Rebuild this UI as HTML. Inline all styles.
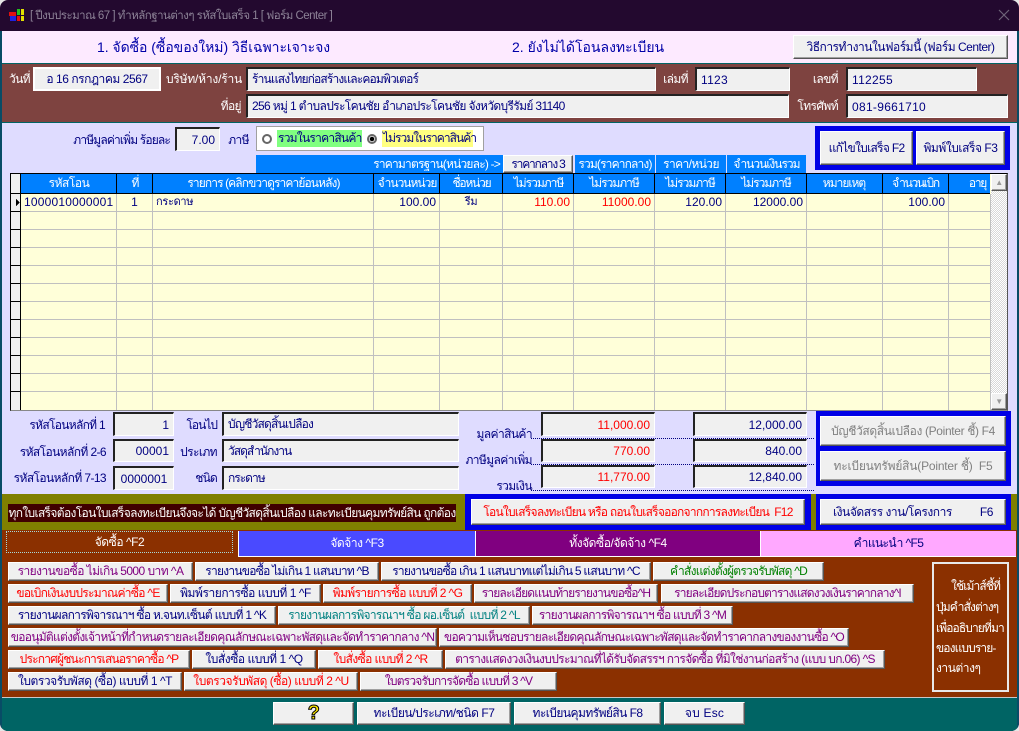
<!DOCTYPE html>
<html lang="th"><head><meta charset="utf-8"><title>ฟอร์ม Center</title>
<style>
html,body{margin:0;padding:0;width:1019px;height:731px;overflow:hidden;background:#e6e6e6}
body{font:12px "Liberation Sans","Noto Sans CJK SC",sans-serif;letter-spacing:-.45px;color:#000080;position:relative}
div,span.a{position:absolute;box-sizing:border-box;white-space:nowrap}
.r{background:#f0f0f0;border:1px solid;border-color:#fff #555 #555 #fff;box-shadow:inset -1px -1px 0 #a0a0a0;display:flex;align-items:center;justify-content:center}
.s{background:#f0f0f0;border:1px solid;border-color:#222 #fff #fff #222;border-top-width:2px;border-left-width:2px;display:flex;align-items:center;padding:0 4px}
.n{justify-content:flex-end;letter-spacing:0}
.m{letter-spacing:.3px}
.l{text-align:right;height:18px;line-height:18px;letter-spacing:-.6px}
.w{color:#fff}
.h{background:#0080ff;color:#fff;height:19px;top:174px;display:flex;align-items:center;justify-content:center;letter-spacing:-1px}
.c{height:17px;line-height:17px;top:194px;padding:0 3px;letter-spacing:0}
.q{letter-spacing:-.75px}
.t{letter-spacing:-.9px}
.red{color:#f00}.pur{color:#800080}.grn{color:#008000}.tea{color:#008080}
.f{background:#0000e6}
</style></head><body>
<div style="left:0;top:0;width:1019px;height:731px;background:#23092f;border-radius:8px;overflow:hidden">
<div style="left:0;top:31px;width:2px;height:700px;background:#084c66"></div>
<div style="left:1017px;top:31px;width:2px;height:700px;background:#084c66"></div>

<!-- title -->
<svg style="position:absolute;left:9px;top:8px" width="16" height="15" viewBox="0 0 16 15"><rect x="0" y="4" width="7" height="4" fill="#e01010"/><rect x="1" y="8" width="6" height="5" fill="#2020e0"/><rect x="8" y="1" width="3" height="6" fill="#20c020"/><rect x="12" y="1" width="3" height="6" fill="#e0e000"/><rect x="8" y="8" width="3" height="5" fill="#e01010"/><rect x="12" y="8" width="3" height="5" fill="#e0e000"/></svg>
<div style="left:30px;top:7px;color:#8c8296;height:18px;line-height:18px;font-size:11.5px;letter-spacing:-.52px">[ ปีงบประมาณ 67 ] ทำหลักฐานต่างๆ รหัสใบเสร็จ 1 [ ฟอร์ม Center ]</div>
<svg style="position:absolute;left:998px;top:9px" width="12" height="12"><path d="M1 1L11 11M11 1L1 11" stroke="#6e6478" stroke-width="1.2"/></svg>

<!-- pink band -->
<div style="left:2px;top:31px;width:1015px;height:32px;background:#fdeaff"></div>
<div style="left:2px;top:63px;width:1015px;height:1px;background:#006464"></div>
<div style="left:97px;top:36px;font-size:14px;letter-spacing:-.05px;height:22px;line-height:22px;color:#0000a8">1. จัดซื้อ (ซื้อของใหม่) วิธีเฉพาะเจาะจง</div>
<div style="left:512px;top:36px;font-size:14px;letter-spacing:0;height:22px;line-height:22px;color:#0000a8">2. ยังไม่ได้โอนลงทะเบียน</div>
<div class="r" style="left:793px;top:35px;width:215px;height:24px;letter-spacing:-.5px">วิธีการทำงานในฟอร์มนี้ (ฟอร์ม Center)</div>

<!-- brown band -->
<div style="left:2px;top:64px;width:1015px;height:58px;background:#7e4340"></div>
<div style="left:2px;top:122px;width:1015px;height:1px;background:#006464"></div>
<div class="l w" style="left:5px;top:70px;width:25px">วันที่</div>
<div class="r" style="left:33px;top:67px;width:128px;height:24px;border-color:#fff;border-width:2px;box-shadow:none">อ 16 กรกฎาคม 2567</div>
<div class="l w" style="left:160px;top:70px;width:82px;letter-spacing:-.2px">บริษัท/ห้าง/ร้าน</div>
<div class="s" style="left:246px;top:67px;width:410px;height:24px;letter-spacing:-.85px">ร้านแสงไทยก่อสร้างและคอมพิวเตอร์</div>
<div class="l w" style="left:655px;top:70px;width:33px">เล่มที่</div>
<div class="s m" style="left:695px;top:67px;width:95px;height:24px">1123</div>
<div class="l w" style="left:800px;top:70px;width:38px">เลขที่</div>
<div class="s m" style="left:846px;top:67px;width:131px;height:24px">112255</div>
<div class="l w" style="left:200px;top:97px;width:41px">ที่อยู่</div>
<div class="s" style="left:246px;top:94px;width:543px;height:24px;letter-spacing:-.65px">256 หมู่ 1 ตำบลประโคนชัย อำเภอประโคนชัย จังหวัดบุรีรัมย์ 31140</div>
<div class="l w" style="left:790px;top:97px;width:48px">โทรศัพท์</div>
<div class="s m" style="left:846px;top:94px;width:162px;height:24px">081-9661710</div>

<!-- lavender -->
<div style="left:2px;top:123px;width:1015px;height:371px;background:#dfdcff"></div>
<div class="l" style="left:40px;top:131px;width:130px;letter-spacing:-.85px">ภาษีมูลค่าเพิ่ม ร้อยละ</div>
<div class="s n" style="left:175px;top:127px;width:45px;height:24px;border-right-color:#fff">7.00</div>
<div class="l" style="left:225px;top:131px;width:24px">ภาษี</div>
<div style="left:256px;top:126px;width:228px;height:25px;background:#fff;border:1px solid #a0a0a0"></div>
<div style="left:262px;top:134px;width:10px;height:10px;border-radius:50%;background:#fff;border:2px solid #666"></div>
<div style="left:277px;top:130px;width:85px;height:17px;background:#80ff80;line-height:17px;padding-left:1px;letter-spacing:-.75px">รวมในราคาสินค้า</div>
<div style="left:367px;top:134px;width:10px;height:10px;border-radius:50%;background:radial-gradient(circle,#000 0 2px,#fff 2.5px);border:2px solid #666"></div>
<div style="left:382px;top:130px;width:91px;height:17px;background:#ffff80;line-height:17px;padding-left:1px;letter-spacing:-.95px">ไม่รวมในราคาสินค้า</div>

<div class="w" style="left:256px;top:155px;width:247px;height:18px;background:#0080ff;line-height:18px;text-align:right;padding-right:3px;letter-spacing:-.8px">ราคามาตรฐาน(หน่วยละ) -&gt;</div>
<div class="r" style="left:503px;top:155px;width:70px;height:18px;letter-spacing:-1.2px">ราคากลาง 3</div>
<div class="w" style="left:575px;top:155px;width:80px;height:18px;background:#0080ff;line-height:18px;text-align:center;letter-spacing:-.85px">รวม(ราคากลาง)</div>
<div class="w" style="left:656px;top:155px;width:70px;height:18px;background:#0080ff;line-height:18px;text-align:center;letter-spacing:-.6px">ราคา/หน่วย</div>
<div class="w" style="left:727px;top:155px;width:79px;height:18px;background:#0080ff;line-height:18px;text-align:center;letter-spacing:-1px">จำนวนเงินรวม</div>

<div class="f" style="left:815px;top:126px;width:195px;height:44px"></div>
<div class="r" style="left:820px;top:131px;width:93px;height:34px;letter-spacing:-.7px">แก้ไขใบเสร็จ F2</div>
<div class="r" style="left:916px;top:131px;width:89px;height:34px">พิมพ์ใบเสร็จ F3</div>

<!-- grid -->
<div style="left:10px;top:173px;width:998px;height:238px;background:#ffffd9;border:1px solid #000;border-left-color:#000;border-bottom-color:#888;border-right-color:#555"></div>
<div style="left:11px;top:174px;width:10px;height:236px;background:#f0f0f0"></div>
<div class="h" style="left:21px;width:96px;letter-spacing:-.45px">รหัสโอน</div>
<div class="h" style="left:117px;width:36px">ที่</div>
<div class="h" style="left:153px;width:221px;letter-spacing:-.9px">รายการ (คลิกขวาดูราคาย้อนหลัง)</div>
<div class="h" style="left:374px;width:66px">จำนวนหน่วย</div>
<div class="h" style="left:440px;width:63px;letter-spacing:-1.2px">ชื่อหน่วย</div>
<div class="h" style="left:503px;width:71px">ไม่รวมภาษี</div>
<div class="h" style="left:574px;width:80px">ไม่รวมภาษี</div>
<div class="h" style="left:654px;width:72px">ไม่รวมภาษี</div>
<div class="h" style="left:726px;width:80px">ไม่รวมภาษี</div>
<div class="h" style="left:806px;width:76px">หมายเหตุ</div>
<div class="h" style="left:882px;width:67px;letter-spacing:-1.3px">จำนวนเบิก</div>
<div class="h" style="left:949px;width:41px;justify-content:flex-end;padding-right:4px;letter-spacing:-1.3px">อายุ</div>
<svg style="position:absolute;left:0;top:0" width="1019" height="415" shape-rendering="crispEdges">
<g stroke="#c0c0c0"><path d="M21 211.5H990M21 229.5H990M21 247.5H990M21 265.5H990M21 283.5H990M21 301.5H990M21 319.5H990M21 337.5H990M21 355.5H990M21 373.5H990M21 391.5H990M116.500 194V410M152.500 194V410M373.500 194V410M439.500 194V410M502.500 194V410M573.500 194V410M654.500 194V410M725.500 194V410M806.500 194V410M882.500 194V410M948.500 194V410M990.500 194V410"/></g>
<g stroke="#000"><path d="M20.500 174V410M116.500 174V194M152.500 174V194M373.500 174V194M439.500 174V194M502.500 174V194M573.500 174V194M654.500 174V194M725.500 174V194M806.500 174V194M882.500 174V194M948.500 174V194M11 193.500H990M11 211.500H21M11 229.500H21M11 247.500H21M11 265.500H21M11 283.500H21M11 301.500H21M11 319.500H21M11 337.500H21M11 355.500H21M11 373.500H21M11 391.500H21"/></g>
<path d="M16 199l4 3.500-4 3.500z" fill="#000"/>
</svg>
<div style="left:991px;top:174px;width:16px;height:236px;background:repeating-conic-gradient(#fff 0 25%,#d8d8d8 0 50%) 0 0/2px 2px"></div>
<div class="r" style="left:991px;top:174px;width:16px;height:17px;color:#999;font-size:8px">▲</div>
<div class="r" style="left:991px;top:393px;width:16px;height:17px;color:#999;font-size:8px">▼</div>
<div class="c" style="left:21px;width:95px;text-align:center;letter-spacing:.2px">1000010000001</div>
<div class="c" style="left:117px;width:35px;text-align:center">1</div>
<div class="c" style="left:153px;width:200px;font-size:11px;letter-spacing:-.3px">กระดาษ</div>
<div class="c" style="left:374px;width:65px;text-align:right">100.00</div>
<div class="c" style="left:440px;width:62px;text-align:center;font-size:11px;letter-spacing:-.3px">รีม</div>
<div class="c red" style="left:503px;width:70px;text-align:right">110.00</div>
<div class="c red" style="left:574px;width:80px;text-align:right">11000.00</div>
<div class="c" style="left:654px;width:71px;text-align:right">120.00</div>
<div class="c" style="left:726px;width:80px;text-align:right">12000.00</div>
<div class="c" style="left:882px;width:66px;text-align:right">100.00</div>

<!-- lower info -->
<div class="l" style="left:5px;top:416px;width:100px;letter-spacing:-.7px">รหัสโอนหลักที่ 1</div>
<div class="s n" style="left:113px;top:412px;width:61px;height:24px">1</div>
<div class="l" style="left:175px;top:416px;width:42px;letter-spacing:-1px">โอนไป</div>
<div class="s" style="left:222px;top:412px;width:237px;height:24px;letter-spacing:-.8px">บัญชีวัสดุสิ้นเปลือง</div>
<div class="l" style="left:5px;top:443px;width:101px">รหัสโอนหลักที่ 2-6</div>
<div class="s n" style="left:113px;top:439px;width:61px;height:23px">00001</div>
<div class="l" style="left:175px;top:443px;width:42px">ประเภท</div>
<div class="s" style="left:222px;top:439px;width:237px;height:23px;letter-spacing:-1px">วัสดุสำนักงาน</div>
<div class="l" style="left:5px;top:469px;width:101px">รหัสโอนหลักที่ 7-13</div>
<div class="s" style="left:113px;top:466px;width:61px;height:24px;justify-content:center;letter-spacing:0">0000001</div>
<div class="l" style="left:175px;top:469px;width:42px;letter-spacing:-.8px">ชนิด</div>
<div class="s" style="left:222px;top:466px;width:237px;height:24px;letter-spacing:-1px">กระดาษ</div>

<div class="l" style="left:465px;top:425px;width:67px">มูลค่าสินค้า</div>
<div class="l" style="left:465px;top:451px;width:67px">ภาษีมูลค่าเพิ่ม</div>
<div class="l" style="left:465px;top:477px;width:67px">รวมเงิน</div>
<div style="left:531px;top:438px;width:283px;height:0;border-top:1px dotted #000080"></div>
<div style="left:531px;top:464px;width:283px;height:0;border-top:1px dotted #000080"></div>
<div style="left:531px;top:490px;width:283px;height:0;border-top:1px dotted #000080"></div>
<div class="s n red" style="left:541px;top:412px;width:114px;height:24px">11,000.00</div>
<div class="s n" style="left:693px;top:412px;width:114px;height:24px">12,000.00</div>
<div class="s n red" style="left:541px;top:439px;width:114px;height:23px">770.00</div>
<div class="s n" style="left:693px;top:439px;width:114px;height:23px">840.00</div>
<div class="s n red" style="left:541px;top:465px;width:114px;height:23px">11,770.00</div>
<div class="s n" style="left:693px;top:465px;width:114px;height:23px">12,840.00</div>

<div class="f" style="left:816px;top:411px;width:195px;height:75px"></div>
<div class="r" style="left:820px;top:416px;width:186px;height:30px;color:#808080;letter-spacing:-.35px">บัญชีวัสดุสิ้นเปลือง (Pointer ชี้) F4</div>
<div class="r" style="left:820px;top:451px;width:186px;height:30px;color:#808080;letter-spacing:-.2px">ทะเบียนทรัพย์สิน(Pointer ชี้)&nbsp; F5</div>

<!-- olive -->
<div style="left:2px;top:494px;width:1015px;height:36px;background:#808000"></div>
<div class="w" style="left:8px;top:504px;width:448px;height:18px;background:#400000;line-height:18px;text-align:center;letter-spacing:-.65px">ทุกใบเสร็จต้องโอนใบเสร็จลงทะเบียนจึงจะได้ บัญชีวัสดุสิ้นเปลือง และทะเบียนคุมทรัพย์สิน ถูกต้อง</div>
<div class="f" style="left:465px;top:494px;width:346px;height:36px"></div>
<div class="r red" style="left:471px;top:499px;width:334px;height:26px;letter-spacing:-.75px">โอนใบเสร็จลงทะเบียน หรือ ถอนใบเสร็จออกจากการลงทะเบียน&nbsp; F12</div>
<div class="f" style="left:816px;top:494px;width:195px;height:36px"></div>
<div class="r" style="left:820px;top:499px;width:186px;height:26px;justify-content:space-between;padding:0 12px 0 12px"><span>เงินจัดสรร งาน/โครงการ</span><span>F6</span></div>

<!-- brown bottom -->
<div style="left:2px;top:530px;width:1015px;height:167px;background:#8b3000"></div>
<div class="w" style="left:6px;top:531px;width:227px;height:22px;border:1px dotted #a8d8d8;line-height:20px;text-align:center">จัดซื้อ ^F2</div>
<div style="left:238px;top:531px;width:1px;height:26px;background:#fff"></div>
<div class="w" style="left:239px;top:531px;width:236px;height:25px;background:#4a4aff;line-height:25px;text-align:center">จัดจ้าง ^F3</div>
<div style="left:475px;top:531px;width:1px;height:26px;background:#fff"></div>
<div class="w" style="left:476px;top:531px;width:284px;height:25px;background:#800080;line-height:25px;text-align:center">ทั้งจัดซื้อ/จัดจ้าง ^F4</div>
<div style="left:760px;top:531px;width:1px;height:26px;background:#fff"></div>
<div style="left:761px;top:531px;width:255px;height:25px;background:#ffa8ff;line-height:25px;text-align:center;letter-spacing:-.6px">คำแนะนำ ^F5</div>
<div style="left:239px;top:556px;width:777px;height:1px;background:#fff"></div>

<div class="r pur" style="left:8px;top:562px;width:185px;height:19px;letter-spacing:-.55px">รายงานขอซื้อ ไม่เกิน 5000 บาท ^A</div>
<div class="r q" style="left:195px;top:562px;width:184px;height:19px">รายงานขอซื้อ ไม่เกิน 1 แสนบาท ^B</div>
<div class="r q" style="left:381px;top:562px;width:270px;height:19px">รายงานขอซื้อ เกิน 1 แสนบาทแต่ไม่เกิน 5 แสนบาท ^C</div>
<div class="r grn q" style="left:653px;top:562px;width:171px;height:19px">คำสั่งแต่งตั้งผู้ตรวจรับพัสดุ ^D</div>

<div class="r red" style="left:8px;top:584px;width:160px;height:19px;letter-spacing:-.7px">ขอเบิกเงินงบประมาณค่าซื้อ ^E</div>
<div class="r" style="left:170px;top:584px;width:151px;height:19px">พิมพ์รายการซื้อ แบบที่ 1 ^F</div>
<div class="r red" style="left:323px;top:584px;width:149px;height:19px;letter-spacing:-.6px">พิมพ์รายการซื้อ แบบที่ 2 ^G</div>
<div class="r pur" style="left:474px;top:584px;width:184px;height:19px;letter-spacing:-.85px">รายละเอียดแนบท้ายรายงานขอซื้อ^H</div>
<div class="r pur" style="left:661px;top:584px;width:253px;height:19px;letter-spacing:-.85px">รายละเอียดประกอบตารางแสดงวงเงินราคากลาง^I</div>

<div class="r" style="left:8px;top:606px;width:268px;height:19px;letter-spacing:-.7px">รายงานผลการพิจารณาฯ ซื้อ ห.จนท.เซ็นต์ แบบที่ 1 ^K</div>
<div class="r tea" style="left:278px;top:606px;width:252px;height:19px;letter-spacing:-.7px">รายงานผลการพิจารณาฯ ซื้อ ผอ.เซ็นต์&nbsp; แบบที่ 2 ^L</div>
<div class="r pur q" style="left:532px;top:606px;width:201px;height:19px">รายงานผลการพิจารณาฯ ซื้อ แบบที่ 3 ^M</div>

<div class="r pur" style="left:8px;top:628px;width:429px;height:19px;letter-spacing:-.7px">ขออนุมัติแต่งตั้งเจ้าหน้าที่กำหนดรายละเอียดคุณลักษณะเฉพาะพัสดุและจัดทำราคากลาง ^N</div>
<div class="r pur q" style="left:439px;top:628px;width:410px;height:19px">ขอความเห็นชอบรายละเอียดคุณลักษณะเฉพาะพัสดุและจัดทำราคากลางของงานซื้อ ^O</div>

<div class="r red" style="left:8px;top:650px;width:182px;height:19px;letter-spacing:-.8px">ประกาศผู้ชนะการเสนอราคาซื้อ ^P</div>
<div class="r" style="left:192px;top:650px;width:124px;height:19px">ใบสั่งซื้อ แบบที่ 1 ^Q</div>
<div class="r red" style="left:318px;top:650px;width:125px;height:19px;letter-spacing:-.6px">ใบสั่งซื้อ แบบที่ 2 ^R</div>
<div class="r pur" style="left:445px;top:650px;width:440px;height:19px;letter-spacing:-.65px">ตารางแสดงวงเงินงบประมาณที่ได้รับจัดสรรฯ การจัดซื้อ ที่มิใช่งานก่อสร้าง (แบบ บก.06) ^S</div>

<div class="r" style="left:8px;top:672px;width:174px;height:19px">ใบตรวจรับพัสดุ (ซื้อ) แบบที่ 1 ^T</div>
<div class="r red" style="left:184px;top:672px;width:174px;height:19px">ใบตรวจรับพัสดุ (ซื้อ) แบบที่ 2 ^U</div>
<div class="r pur" style="left:360px;top:672px;width:197px;height:19px;letter-spacing:-.8px">ใบตรวจรับการจัดซื้อ แบบที่ 3 ^V</div>

<div style="left:932px;top:562px;width:77px;height:130px;border:2px solid #e8e8e8"></div>
<div class="w t" style="left:934px;top:577px;width:70px;text-align:right;padding-right:4px;line-height:18px">ใช้เม้าส์ชี้ที่</div>
<div class="w t" style="left:936px;top:598px;line-height:18px">ปุ่มคำสั่งต่างๆ</div>
<div class="w t" style="left:936px;top:619px;line-height:18px">เพื่ออธิบายที่มา</div>
<div class="w t" style="left:936px;top:639px;line-height:18px">ของแบบราย-</div>
<div class="w" style="left:936px;top:659px;line-height:18px">งานต่างๆ</div>

<!-- footer -->
<div style="left:2px;top:697px;width:1015px;height:34px;background:#006464;border-top:1px solid #c8c8c8"></div>
<div class="r" style="left:273px;top:702px;width:81px;height:23px"><span style="font:bold 20px 'Liberation Sans',sans-serif;color:#ffe800;-webkit-text-stroke:1px #000">?</span></div>
<div class="r" style="left:357px;top:702px;width:154px;height:23px">ทะเบียน/ประเภท/ชนิด F7</div>
<div class="r" style="left:514px;top:702px;width:147px;height:23px;letter-spacing:-.55px">ทะเบียนคุมทรัพย์สิน F8</div>
<div class="r" style="left:664px;top:702px;width:81px;height:23px;letter-spacing:.2px">จบ Esc</div>
</div>
</body></html>
